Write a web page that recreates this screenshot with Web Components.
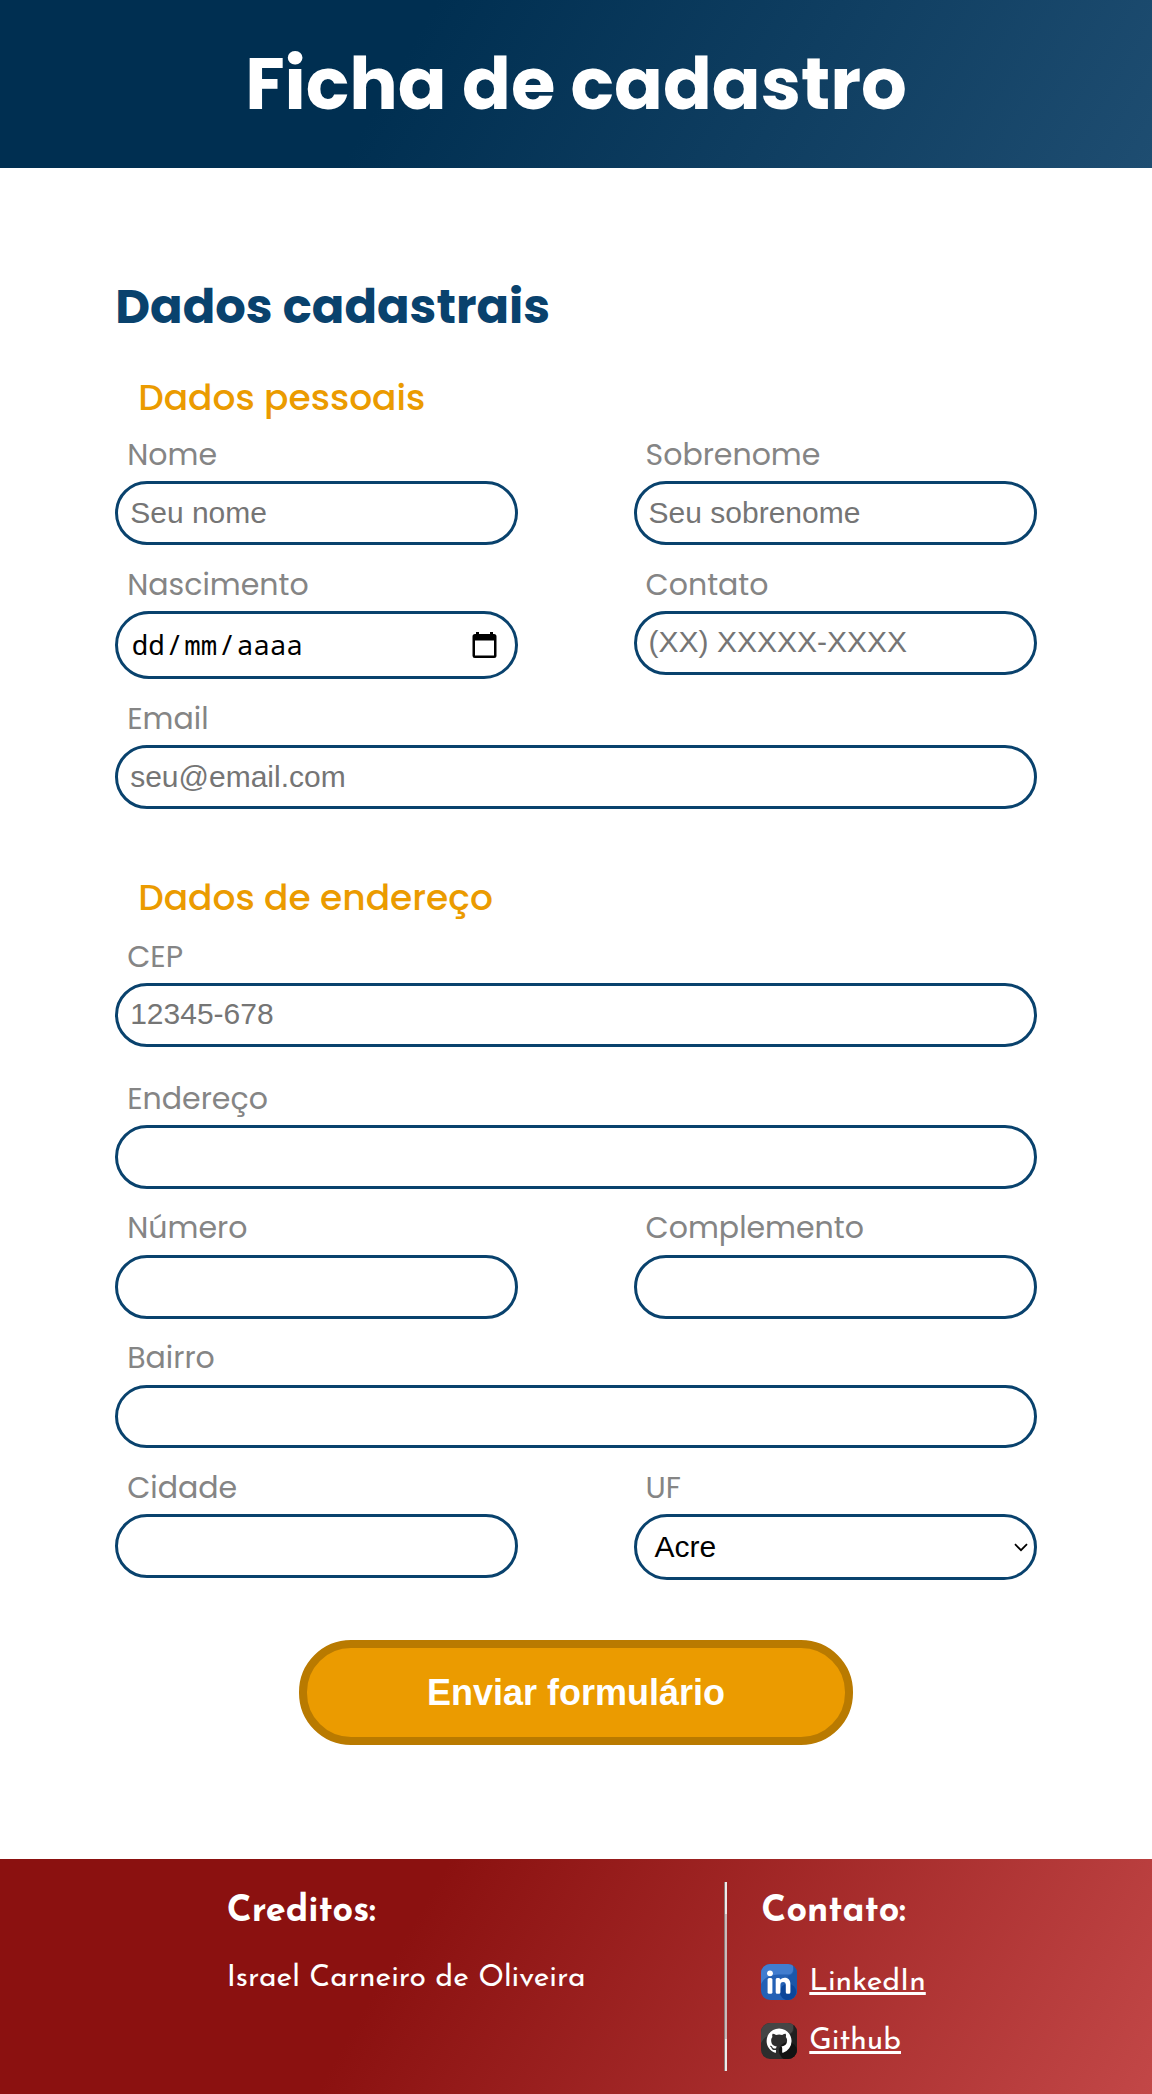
<!DOCTYPE html>
<html lang="pt-BR">
<head>
<meta charset="utf-8">
<title>Ficha de cadastro</title>
<style>
body{margin:0;background:#fff;font-family:Poppins,Inter,sans-serif}
</style>
</head>
<body>
<cadastro-page></cadastro-page>
<script>
const POPPINS = 'Poppins,Inter,sans-serif';
const JOSEFIN = '"Josefin Sans",Lato,sans-serif';

function define(name, render) {
  customElements.define(name, class extends HTMLElement {
    connectedCallback() {
      if (this.shadowRoot) return;
      this.attachShadow({ mode: 'open' }).innerHTML = render(this);
    }
  });
}

define('page-header', () => `<style>
  :host{display:flex;justify-content:center;height:168px;background:linear-gradient(120deg,#002f51 35%,#1e4d71)}
  h1{margin:0;font:700 72px/167px ${POPPINS};color:#fff}
</style><h1><slot></slot></h1>`);

define('form-field', el => `<style>
  :host{display:block;flex:1}
  label{display:block;padding-left:12px;font:400 30px/40px ${POPPINS};color:#858585;margin-bottom:6.3px}
  ::slotted(*){display:flex}
</style>
<label>${el.getAttribute('label')}</label><slot></slot>`);

define('text-box', el => `<style>
  :host{display:block}
  input{display:block;box-sizing:border-box;width:100%;height:63.8px;border:3px solid #09426d;border-radius:32px;
    padding:${el.hasAttribute('raised') ? '0 12px 2px' : '0 12px'};background:#fff;font:30px "Liberation Sans",Arial,sans-serif;outline:none}
  input::placeholder{color:#757575;opacity:1}
</style><input type="text" placeholder="${el.getAttribute('hint') || ''}">`);

define('date-box', () => `<style>
  :host{box-sizing:border-box;height:68.3px;border:3px solid #09426d;border-radius:34px;
    align-items:center;justify-content:space-between;padding:0 18px 0 12px;
    font:27.5px/36px "Noto Sans Mono","DejaVu Sans Mono",monospace;color:#000}
  i{font-style:normal;padding:0 1.5px}
  svg{display:block;width:25px;height:26px}
</style><span><i>dd</i>/<i>mm</i>/<i>aaaa</i></span>
<svg viewBox="0 0 25 26"><path d="M3 2h1V0h3v2h11V0h3v2h1a2.5 2.5 0 0 1 2.5 2.5v19A2.3 2.3 0 0 1 22.2 26H2.8A2.3 2.3 0 0 1 .5 23.7V4.5A2.5 2.5 0 0 1 3 2zM3 8.5v15h19v-15z" fill="#000" fill-rule="evenodd"/></svg>`);

define('state-select', () => `<style>
  :host{box-sizing:border-box;height:66px;border:3px solid #09426d;border-radius:33px;
    align-items:center;justify-content:space-between;padding:0 6px 0 18px;
    font:30px/36px "Liberation Sans",Arial,sans-serif;color:#000}
  svg{display:block;width:14px;height:9px}
</style><span>Acre</span>
<svg viewBox="0 0 14 9"><path d="M1 1.2l6 6 6-6" fill="none" stroke="#000" stroke-width="1.8"/></svg>`);

define('cadastro-form', () => `<style>
  :host{display:block;box-sizing:border-box;padding:104px 115.2px 0;height:1691.3px}
  h2{margin:0 0 30.5px;font:700 48px/70px ${POPPINS};color:#09426d}
  h3{margin:0;padding-left:23px;font:500 36px/50px ${POPPINS};color:#eb9b00}
  .row{display:flex;gap:115.2px;align-items:flex-start}
  button{display:block;box-sizing:border-box;width:554px;height:105px;margin:59.9px auto 0;padding:0;
    border:8px solid #b97a00;border-radius:52px;background:#eb9b00;color:#fff;font:700 36px/42px "Liberation Sans",Arial,sans-serif}
</style>
<h2>Dados cadastrais</h2>
<h3>Dados pessoais</h3>
<div class="row" style="margin-top:12.3px">
  <form-field label="Nome"><text-box hint="Seu nome"></text-box></form-field>
  <form-field label="Sobrenome"><text-box hint="Seu sobrenome"></text-box></form-field>
</div>
<div class="row" style="margin-top:19.8px">
  <form-field label="Nascimento"><date-box></date-box></form-field>
  <form-field label="Contato"><text-box raised hint="(XX) XXXXX-XXXX"></text-box></form-field>
</div>
<div class="row" style="margin-top:19.5px">
  <form-field label="Email"><text-box hint="seu@email.com"></text-box></form-field>
</div>
<h3 style="margin-top:64.3px">Dados de endereço</h3>
<div class="row" style="margin-top:13.6px">
  <form-field label="CEP"><text-box raised hint="12345-678"></text-box></form-field>
</div>
<div class="row" style="margin-top:32px">
  <form-field label="Endereço"><text-box></text-box></form-field>
</div>
<div class="row" style="margin-top:19.5px">
  <form-field label="Número"><text-box></text-box></form-field>
  <form-field label="Complemento"><text-box></text-box></form-field>
</div>
<div class="row" style="margin-top:19.7px">
  <form-field label="Bairro"><text-box></text-box></form-field>
</div>
<div class="row" style="margin-top:19.7px">
  <form-field label="Cidade"><text-box></text-box></form-field>
  <form-field label="UF"><state-select></state-select></form-field>
</div>
<button type="button">Enviar formulário</button>`);

define('linkedin-icon', () => `<style>:host,svg{display:block;width:36px;height:36px}</style>
<svg viewBox="0 0 36 36"><defs><clipPath id="c"><rect width="36" height="36" rx="9"/></clipPath></defs>
<g clip-path="url(#c)"><rect width="36" height="36" fill="#2461b5"/>
<path d="M32 9Q34 5 32 0h4v36H25l2-24q4-1 5-3z" fill="#1b57aa"/>
<path d="M0 20V0h32v6a4.500 4.500 0 0 1-4.500 4.500H18C8 11 3 14 0 20z" fill="#417dcf"/>
<circle cx="27" cy="28" r="8.200" fill="#0b469b"/></g>
<circle cx="9" cy="9.300" r="2.900" fill="#fff"/><rect x="6.600" y="14" width="4.800" height="15.800" rx="1.500" fill="#fff"/>
<path d="M16 14h2q1 0 1.200 1.500Q21 13.800 23.600 13.800c3.900 0 5.800 2.500 5.800 6.500V28.300q0 1.500-1.500 1.500h-1.600q-1.500 0-1.500-1.500V21q0-3-2.600-3-2.800 0-2.800 3.200v7.100q0 1.500-1.500 1.500h-1.700q-1.500 0-1.500-1.500V15.500Q14.700 14 16 14z" fill="#fff"/></svg>`);

define('github-icon', () => `<style>:host,svg{display:block;width:36px;height:36px}</style>
<svg viewBox="0 0 36 36"><defs><clipPath id="c"><rect width="36" height="36" rx="9"/></clipPath></defs>
<g clip-path="url(#c)"><rect width="36" height="36" fill="#2d2d2d"/>
<path d="M32 9Q34 5 32 0h4v36H25l2-24q4-1 5-3z" fill="#202020"/>
<path d="M0 20V0h32v6a4.500 4.500 0 0 1-4.500 4.500H18C8 11 3 14 0 20z" fill="#454545"/>
<circle cx="27" cy="28" r="9" fill="#121212"/></g>
<g transform="translate(5.600 5.500) scale(1.560)"><path d="M8 0C3.580 0 0 3.580 0 8c0 3.540 2.290 6.530 5.470 7.590.4.070.55-.17.55-.38 0-.19-.01-.82-.01-1.490-2.010.37-2.530-.49-2.690-.94-.09-.23-.48-.94-.82-1.130-.28-.15-.68-.52-.01-.53.63-.01 1.080.58 1.230.82.72 1.210 1.870.87 2.330.66.070-.52.28-.87.51-1.070-1.780-.2-3.640-.89-3.640-3.950 0-.87.31-1.590.82-2.150-.08-.2-.36-1.020.08-2.120 0 0 .67-.21 2.200.82a7.600 7.600 0 0 1 4 0c1.530-1.040 2.200-.82 2.200-.82.44 1.100.16 1.920.08 2.120.51.56.82 1.270.82 2.150 0 3.070-1.870 3.750-3.650 3.950.29.25.54.73.54 1.480 0 1.070-.01 1.930-.01 2.200 0 .21.15.46.55.38A8 8 0 0 0 16 8c0-4.420-3.580-8-8-8z" fill="#fff"/></g></svg>`);

define('footer-link', el => `<style>
  :host{display:flex;gap:12px;height:36px;align-items:flex-start}
  a{display:block;margin-top:.7px;color:#fff;font:400 30px/36px ${JOSEFIN};
    text-decoration:underline;text-decoration-thickness:3px;text-underline-offset:2px;text-decoration-skip-ink:none}
</style><slot></slot><a>${el.getAttribute('label')}</a>`);

define('page-footer', () => `<style>
  :host{display:flex;align-items:flex-start;box-sizing:border-box;height:234.7px;background:linear-gradient(120deg,#8b1110 35%,#c24747);color:#fff}
  h4{margin:0;font:700 36px/42px ${JOSEFIN}}
  p{margin:28.8px 0 0;font:400 30px/36px ${JOSEFIN}}
  .credits{box-sizing:border-box;width:723.5px;padding:31.4px 0 0 226.7px}
  .rule{width:3.5px;height:189px;margin-top:22.7px;
    background:linear-gradient(90deg,#8b7777 0 1.2px,transparent 1.2px),linear-gradient(#efe9e9 0 32px,#cbbaba 32px 157px,#efe9e9 157px)}
  .contact{padding:31.4px 0 0 34.3px}
  .links{display:flex;flex-direction:column;gap:23.3px;margin-top:31.3px}
</style>
<div class="credits"><h4>Creditos:</h4><p>Israel Carneiro de Oliveira</p></div>
<div class="rule"></div>
<div class="contact"><h4>Contato:</h4>
<div class="links">
<footer-link label="LinkedIn"><linkedin-icon></linkedin-icon></footer-link>
<footer-link label="Github"><github-icon></github-icon></footer-link>
</div></div>`);

define('cadastro-page', () => `<style>:host{display:block;height:2094px;overflow:hidden}</style>
<page-header>Ficha de cadastro</page-header><cadastro-form></cadastro-form><page-footer></page-footer>`);
</script>
</body>
</html>
